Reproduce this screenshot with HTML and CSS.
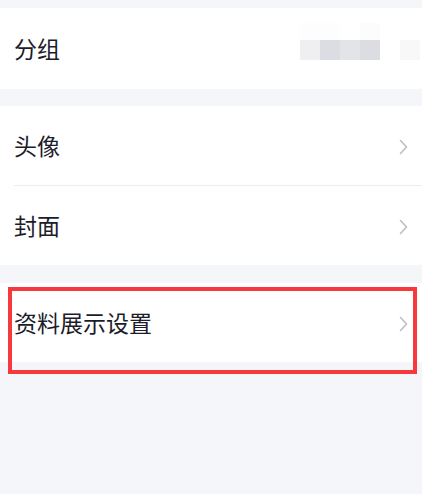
FILE: index.html
```html
<!DOCTYPE html>
<html lang="zh-CN">
<head>
<meta charset="utf-8">
<link rel="stylesheet" href="styles.css">
</head>
<body>
<div class="page">
  <section class="group group-first">
    <div class="row row-tall">
      <span class="label">分组</span>
      <div class="mosaic">
        <i class="m m-t1"></i><i class="m m-t1"></i><i class="m"></i><i class="m m-t2"></i><i class="m"></i><i class="m"></i>
        <i class="m m-a"></i><i class="m m-b"></i><i class="m m-c"></i><i class="m m-b"></i><i class="m"></i><i class="m m-d"></i>
      </div>
    </div>
  </section>
  <section class="group">
    <div class="row">
      <span class="label">头像</span>
      <svg class="chev" width="9" height="16" viewBox="0 0 9 16"><path d="M1.5 1.5 L7.5 8 L1.5 14.5" fill="none" stroke="#bdbdc7" stroke-width="1.6" stroke-linecap="round" stroke-linejoin="round"/></svg>
    </div>
    <div class="divider"></div>
    <div class="row">
      <span class="label">封面</span>
      <svg class="chev" width="9" height="16" viewBox="0 0 9 16"><path d="M1.5 1.5 L7.5 8 L1.5 14.5" fill="none" stroke="#bdbdc7" stroke-width="1.6" stroke-linecap="round" stroke-linejoin="round"/></svg>
    </div>
  </section>
  <section class="group group-last">
    <div class="row">
      <span class="label">资料展示设置</span>
      <svg class="chev" width="9" height="16" viewBox="0 0 9 16"><path d="M1.5 1.5 L7.5 8 L1.5 14.5" fill="none" stroke="#bdbdc7" stroke-width="1.6" stroke-linecap="round" stroke-linejoin="round"/></svg>
    </div>
    <div class="highlight"></div>
  </section>
</div>
</body>
</html>
```
FILE: styles.css
```css
html, body {
  margin: 0;
  padding: 0;
  background: #f5f6fa;
}
.page {
  width: 422px;
  height: 494px;
  padding-top: 8px;
  box-sizing: border-box;
  font-family: "Noto Sans CJK SC", "Noto Sans", sans-serif;
  color: #1c1c2a;
  overflow: hidden;
}
.group {
  background: #ffffff;
  margin-bottom: 17px;
}
.group-last {
  position: relative;
  margin-top: 18px;
}
.row {
  height: 79px;
  display: flex;
  align-items: center;
  justify-content: space-between;
  padding: 0 14px 0 14px;
}
.row-tall {
  height: 81px;
  position: relative;
}
.label {
  font-size: 23px;
  line-height: 1;
  letter-spacing: 0;
}
.chev {
  display: block;
  margin-top: 2px;
}
.divider {
  height: 1px;
  background: #ececee;
  margin-left: 14px;
}
.mosaic {
  align-self: flex-start;
  margin-top: 15px;
  margin-right: -12px;
  display: grid;
  grid-template-columns: repeat(6, 20px);
  grid-template-rows: 17px 20px;
}
.m { display: block; background: #ffffff; }
.m-t1 { background: #fdfdfd; }
.m-t2 { background: #fcfcfc; }
.m-a { background: #efeff2; }
.m-b { background: #dcdde2; }
.m-c { background: #e3e4e8; }
.m-d { background: #f8f8f8; }
.highlight {
  position: absolute;
  left: 8px;
  top: 4px;
  width: 409px;
  height: 87px;
  box-sizing: border-box;
  border: 4px solid #f5393c;
  pointer-events: none;
}
```
